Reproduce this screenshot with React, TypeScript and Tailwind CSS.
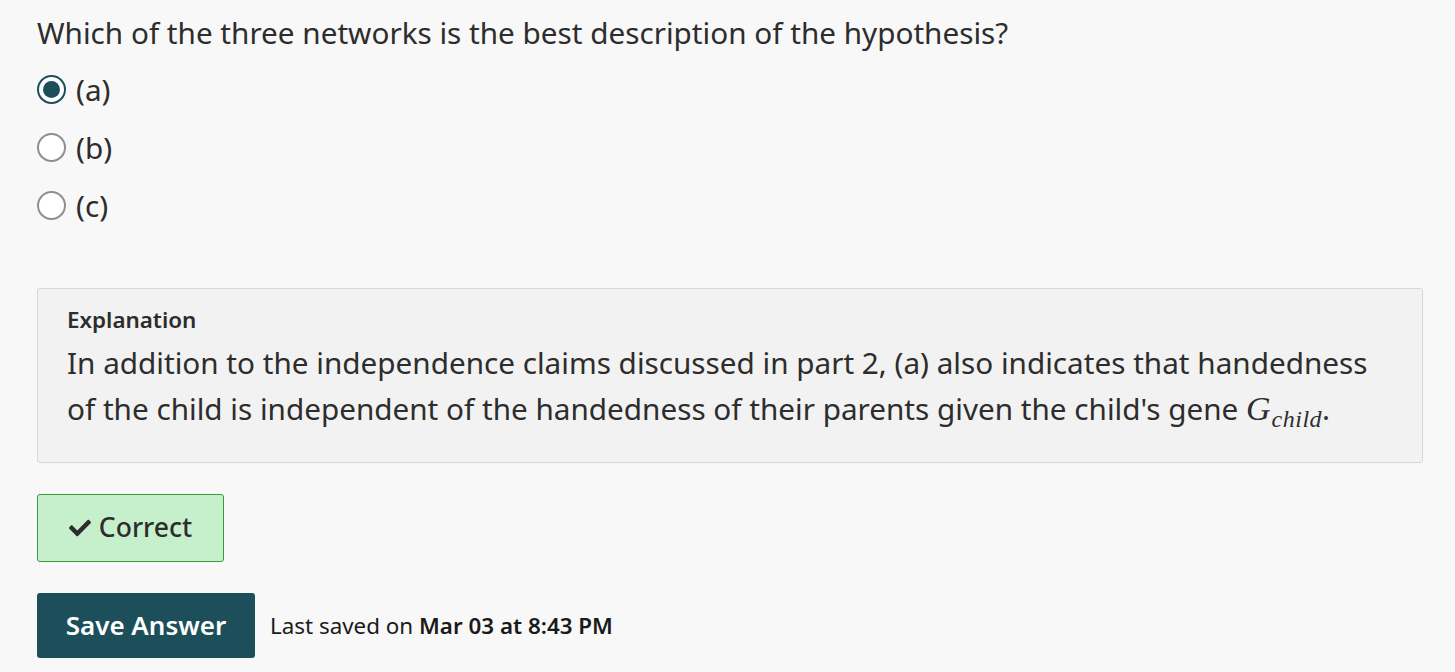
import React from 'react';

const options = ['(a)', '(b)', '(c)'];

function Radio({ checked }: { checked: boolean }) {
  return (
    <span
      className={`flex h-[29px] w-[29px] items-center justify-center rounded-full border-[2.5px] bg-white ${
        checked ? 'border-[#1c4f5a]' : 'border-[#8f8f8f]'
      }`}
    >
      {checked && <span className="h-[17px] w-[17px] rounded-full bg-[#1c4f5a]" />}
    </span>
  );
}

export default function App() {
  return (
    <div
      className="min-h-[672px] bg-[#f8f8f8] px-[37px] pt-[13px] text-[#2d2d2d]"
      style={{ fontFamily: '"Noto Sans", sans-serif' }}
    >
      <h1 className="text-[29.7px] leading-[40px]">
        Which of the three networks is the best description of the hypothesis?
      </h1>

      <div className="mt-[22px] flex flex-col gap-[29px]">
        {options.map((opt, i) => (
          <label key={opt} className="flex h-[29px] items-center gap-[10px]">
            <Radio checked={i === 0} />
            <span className="text-[29.7px] leading-[29px]">{opt}</span>
          </label>
        ))}
      </div>

      <div className="mt-[68px] w-[1386px] rounded-[3px] border border-[#d6d6d6] bg-[#f2f2f2] px-[29px] pb-[29px] pt-[16px]">
        <div className="text-[22.4px] font-semibold leading-[30px]">Explanation</div>
        <p className="mt-[5px] text-[29.7px] leading-[46px]">
          In addition to the independence claims discussed in part 2, (a) also indicates that handedness
          of the child is independent of the handedness of their parents given the child's gene{' '}
          <span className="italic" style={{ fontFamily: '"Liberation Serif", serif' }}>
            <span className="text-[34px] leading-[0]">G</span>
            <span className="relative top-[7px] ml-[1px] text-[24px] leading-[0] tracking-[0.5px]">child</span>
          </span>
          .
        </p>
      </div>

      <div className="mt-[31px] flex h-[68px] w-[187px] items-center justify-center gap-[8px] rounded-[3px] border border-[#3a9a3a] bg-[#c6f0cc] text-[26.5px] font-medium">
        <svg viewBox="0 0 512 512" className="h-[22px] w-[22px] fill-[#2d2d2d]">
          <path d="M173.898 439.404l-166.4-166.4c-9.997-9.997-9.997-26.206 0-36.204l36.203-36.204c9.997-9.998 26.207-9.998 36.204 0L192 312.69 432.095 72.596c9.997-9.997 26.207-9.997 36.204 0l36.203 36.204c9.997 9.997 9.997 26.206 0 36.204l-294.4 294.401c-9.998 9.997-26.207 9.997-36.204-.001z" />
        </svg>
        Correct
      </div>

      <div className="mt-[31px] flex items-center gap-[15px]">
        <button className="h-[65px] w-[218px] rounded-[3px] bg-[#1c4f5a] text-[26px] font-semibold text-white">
          Save Answer
        </button>
        <span className="text-[22.4px] text-[#1a1a1a]">
          Last saved on <span className="font-semibold">Mar 03 at 8:43 PM</span>
        </span>
      </div>
    </div>
  );
}
